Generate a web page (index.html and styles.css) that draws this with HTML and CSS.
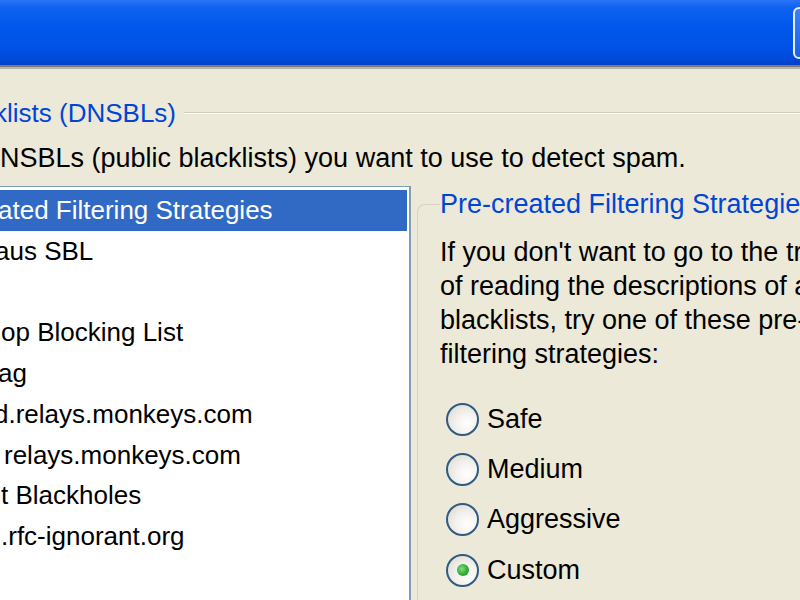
FILE: index.html
```html
<!DOCTYPE html>
<html lang="en">
<head>
    <meta charset="UTF-8">
    <title>DNS Blacklists</title>
    <link rel="stylesheet" href="styles.css">
</head>
<body>
    <div class="titlebar">
        <div class="title-btn"></div>
    </div>

    <div class="dialog">
        <div class="heading">
            <span class="heading-text">klists (DNSBLs)</span>
            <span class="heading-line"></span>
        </div>
        <p class="desc">NSBLs (public blacklists) you want to use to detect spam.</p>

        <div class="panes">
            <ul class="dnsbl-list">
                <li class="selected cut-3">ated Filtering Strategies</li>
                <li class="cut-6">aus SBL</li>
                <li></li>
                <li>op Blocking List</li>
                <li class="cut-3">ag</li>
                <li class="cut-7">d.relays.monkeys.com</li>
                <li class="shift-3">relays.monkeys.com</li>
                <li>t Blackholes</li>
                <li>.rfc-ignorant.org</li>
            </ul>

            <fieldset class="strategies">
                <legend>Pre-created Filtering Strategies</legend>
                <p class="intro">
                    If you don't want to go to the trouble<br>
                    of reading the descriptions of all the<br>
                    blacklists, try one of these pre-created<br>
                    filtering strategies:
                </p>
                <div class="radios">
                    <label class="radio"><span class="dot"></span>Safe</label>
                    <label class="radio"><span class="dot"></span>Medium</label>
                    <label class="radio"><span class="dot"></span>Aggressive</label>
                    <label class="radio"><span class="dot checked"></span>Custom</label>
                </div>
            </fieldset>
        </div>
    </div>
</body>
</html>
```

FILE: styles.css
```css
html, body {
    margin: 0;
    height: 100%;
}
body {
    background-color: #ece9d8;
    font-family: "Liberation Sans", Arial, sans-serif;
    font-size: 27px;
    color: #000;
    overflow: hidden;
    white-space: nowrap;
}
.titlebar {
    height: 65px;
    background: linear-gradient(to bottom, #2a74f6 0%, #0f62f0 12%, #0058ec 40%, #0052e4 75%, #0049d8 92%, #0040c6 100%);
    border-bottom: 2px solid #7d7b72;
    box-shadow: 0 2px 0 #b6b4a8;
    display: flex;
    justify-content: flex-end;
    align-items: center;
}
.title-btn {
    width: 20px;
    height: 48px;
    margin-right: -17px;
    border: 2px solid #e8eefc;
    border-radius: 6px;
    background: linear-gradient(to bottom, #3a82f8, #1660ea);
}
.dialog {
    padding-top: 29px;
}
.heading {
    display: flex;
    align-items: center;
    height: 34px;
}
.heading-text {
    color: #0046d5;
    font-size: 26px;
    margin-left: -6px;
}
.heading-line {
    flex: 1;
    height: 1px;
    margin-left: 8px;
    background-color: #d0d0bf;
    border-bottom: 1px solid #fff;
}
.desc {
    margin: 11px 0 0 0;
    line-height: 34px;
}
.panes {
    display: flex;
    align-items: flex-start;
    margin-top: 11px;
}
.dnsbl-list {
    list-style: none;
    margin: 0 0 0 -20px;
    padding: 3px 2px 0 20px;
    width: 406px;
    height: 420px;
    background-color: #fff;
    border: 1px solid #7f9db9;
    border-right-width: 2px;
    overflow: hidden;
    font-size: 26px;
}
.dnsbl-list li {
    height: 40.75px;
    line-height: 40.75px;
    margin-left: -20px;
    padding-left: 20px;
}
.dnsbl-list li.selected {
    background-color: #316ac5;
    color: #fff;
}
.dnsbl-list li.cut-3 { text-indent: -3px; }
.dnsbl-list li.cut-6 { text-indent: -6px; }
.dnsbl-list li.cut-7 { text-indent: -7px; }
.dnsbl-list li.shift-3 { text-indent: 3px; }
.strategies {
    margin: 1px 0 0 6px;
    padding: 0 0 0 22px;
    border: 1px solid #d6d3c2;
    border-right: none;
    border-bottom: none;
    border-top-left-radius: 8px;
    min-width: 0;
    flex: 1;
    height: 500px;
}
.strategies legend {
    color: #0046d5;
    padding: 0;
    line-height: 34px;
}
.intro {
    margin: 14px 0 0 0;
    line-height: 34px;
}
.radios {
    display: flex;
    flex-direction: column;
    margin-top: 23px;
    margin-left: 6px;
}
.radio {
    display: flex;
    align-items: center;
    height: 50.3px;
    gap: 8px;
}
.dot {
    width: 29px;
    height: 29px;
    border: 2px solid #2f5a82;
    border-radius: 50%;
    background: radial-gradient(circle at 65% 65%, #ffffff 0%, #f3f2ee 40%, #d8d6cc 100%);
    display: flex;
    align-items: center;
    justify-content: center;
}
.dot.checked::after {
    content: "";
    width: 12px;
    height: 12px;
    border-radius: 50%;
    background: radial-gradient(circle at 40% 40%, #7ce07c 0%, #2ea52e 60%, #1b8a1b 100%);
}
```
